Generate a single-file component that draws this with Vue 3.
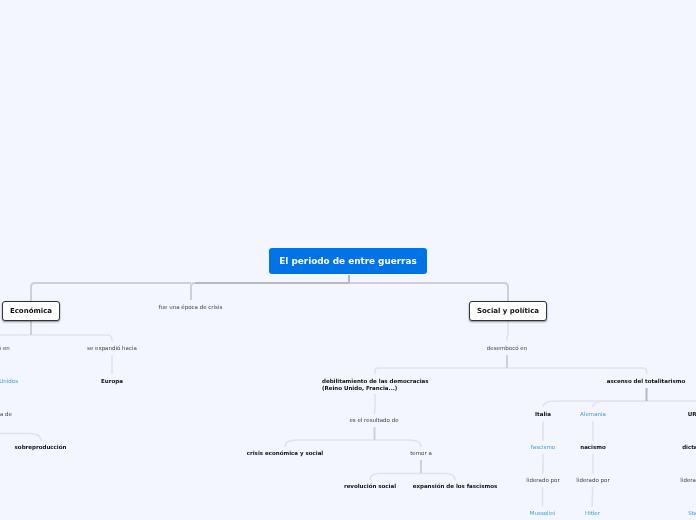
<script setup>
const labels = [
  { t: 'fue una época de crisis', x: 190.5, y: 307 },
  { t: 'se expandió hacia', x: 112, y: 348 },
  { t: 'desembocó en', x: 507, y: 348 },
  { t: 'es el resultado de', x: 374, y: 420 },
  { t: 'temor a', x: 421, y: 453 },
  { t: 'liderado por', x: 543, y: 480 },
  { t: 'liderado por', x: 593, y: 480 },
  { t: 'liderado por', x: 697, y: 480 },
  { t: 'resultó en', x: -4, y: 348 },
  { t: 'a causa de', x: -3, y: 414 },
  { t: 'Europa', x: 112, y: 381, k: 'b' },
  { t: 'sobreproducción', x: 40.5, y: 447, k: 'b' },
  { t: 'crisis económica y social', x: 285, y: 453, k: 'b' },
  { t: 'revolución social', x: 370, y: 486, k: 'b' },
  { t: 'expansión de los fascismos', x: 455, y: 486, k: 'b' },
  { t: 'ascenso del totalitarismo', x: 646, y: 381, k: 'b' },
  { t: 'Italia', x: 543, y: 414, k: 'b' },
  { t: 'nacismo', x: 593, y: 447, k: 'b' },
  { t: 'URSS', x: 696, y: 414, k: 'b' },
  { t: 'dictadura', x: 697, y: 447, k: 'b' },
  { t: 'Estados Unidos', x: -3, y: 381, k: 'c' },
  { t: 'Alemania', x: 593, y: 414, k: 'c' },
  { t: 'fascismo', x: 543, y: 447, k: 'c' },
  { t: 'Mussolini', x: 542.5, y: 513, k: 'c' },
  { t: 'Hitler', x: 592.5, y: 513, k: 'c' },
  { t: 'Stalin', x: 696, y: 513, k: 'c' },
]
const dark = [
  'M195 283H349',
  'M349 275V283',
  'M646.5 388V401',
]
const mid = [
  'M191 300V287Q191 283 195 283',
  'M349 283H504Q508 283 508 287V301',
  'M191 283H35Q31 283 31 287V301',
  'M31 320V335',
  'M374.5 427V440',
  'M421 460V473',
  'M507 355V368',
]
const light = [
  'M-5 335H107Q112 335 112 340V341',
  'M112 355V374',
  'M508 321V335L507 337V341',
  'M375 374V371Q375 368 378 368H643Q646.5 368 646.5 371V374',
  'M375 394V408L374.5 414',
  'M-5 433.5H30Q41 433.5 41 441',
  'M285 447Q285 440 297 440H409Q421 440 421 447',
  'M370 480Q370 473.5 380 473.5H445Q455 473.5 455 480',
  'M543 407Q543 401 558 401H700',
  'M593 407Q593 401 608 401H646',
  'M543 421V441',
  'M593 421V441',
  'M543 454V470L542.5 474',
  'M593 454V474',
  'M542.5 487V507',
  'M592.5 487V494L592 507',
]
</script>

<template>
  <main class="canvas">
    <svg class="links" width="696" height="520" viewBox="0 0 696 520" fill="none">
      <path v-for="d in light" :key="d" :d="d" class="light" />
      <path v-for="d in mid" :key="d" :d="d" class="mid" />
      <path v-for="d in dark" :key="d" :d="d" class="dark" />
    </svg>

    <h1 class="root">El periodo de entre guerras</h1>
    <h2 class="topic economica">Económica</h2>
    <h2 class="topic social">Social y política</h2>

    <span
      v-for="l in labels"
      :key="l.t + l.x"
      class="label"
      :class="l.k"
      :style="{ left: l.x + 'px', top: l.y + 'px' }"
    >{{ l.t }}</span>

    <span class="label b multi">debilitamiento de las democracias<br />(Reino Unido, Francia...)</span>
  </main>
</template>

<style>
html, body { margin: 0; background: #f3f6ff; }
</style>

<style scoped>
.canvas {
  position: relative;
  width: 696px;
  height: 520px;
  overflow: hidden;
  background: #f3f6ff;
  font-family: "DejaVu Sans", Verdana, sans-serif;
  filter: blur(0.3px);
}
.links { position: absolute; left: 0; top: 0; }
.links path { stroke-width: 2; }
.links .light { stroke: #e0e3ec; stroke-width: 1.6; }
.mid { stroke: #cdd0da; }
.dark { stroke: #b7b9bf; }
.root {
  position: absolute;
  left: 269px;
  top: 248px;
  width: 158px;
  height: 26px;
  margin: 0;
  box-sizing: border-box;
  display: flex;
  align-items: center;
  justify-content: center;
  border-radius: 3px;
  background: #0273e6;
  color: #fff;
  font-size: 8.85px;
  font-weight: 700;
  white-space: nowrap;
}
.topic {
  position: absolute;
  top: 301px;
  height: 20px;
  margin: 0;
  box-sizing: border-box;
  display: flex;
  align-items: center;
  justify-content: center;
  border: 1px solid #333;
  border-radius: 3px;
  background: #fff;
  box-shadow: 0 1px 2px rgba(0, 0, 0, .45);
  color: #111;
  font-size: 7px;
  font-weight: 700;
  white-space: nowrap;
}
.economica { left: 2px; width: 58px; }
.social { left: 469px; width: 78px; }
.label {
  position: absolute;
  transform: translate(-50%, -50%);
  color: #444;
  font-size: 5.5px;
  line-height: 7px;
  white-space: nowrap;
}
.label.b { color: #111; font-weight: 700; }
.label.c { color: #3d9bd6; }
.label.multi {
  left: 322px;
  top: 378px;
  line-height: 6.5px;
  transform: none;
}
</style>
